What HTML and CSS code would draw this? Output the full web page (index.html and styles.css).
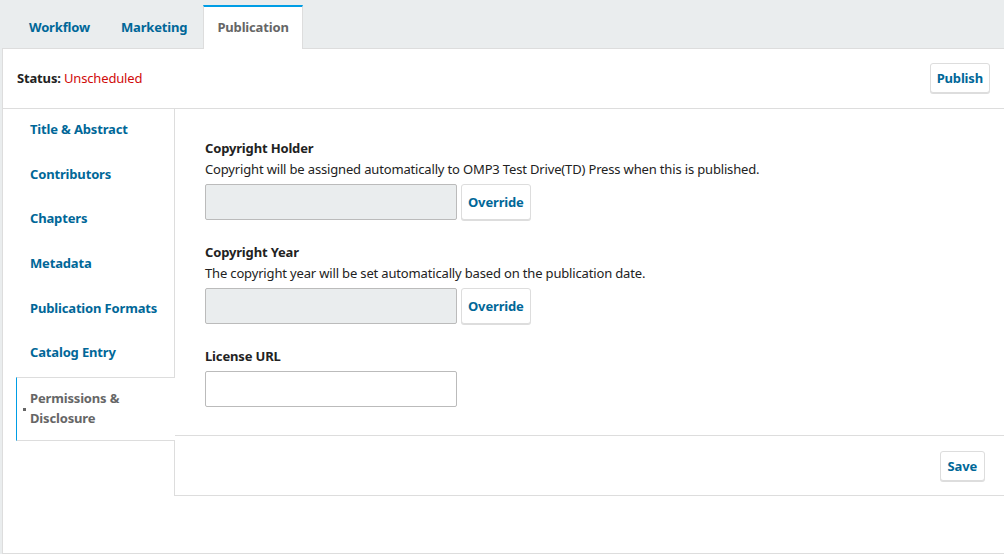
FILE: index.html
```html
<!DOCTYPE html>
<html lang="en">
<head>
<meta charset="utf-8">
<title>Publication</title>
<link rel="stylesheet" href="styles.css">
</head>
<body>
<div class="page">
  <nav class="tabs">
    <a class="tab">Workflow</a>
    <a class="tab">Marketing</a>
    <a class="tab tab--active">Publication</a>
  </nav>
  <div class="panel">
    <div class="status-bar">
      <div class="status"><strong>Status:</strong> <span class="status__value">Unscheduled</span></div>
      <button class="btn btn--publish">Publish</button>
    </div>
    <div class="layout">
      <ul class="side-nav">
        <li class="side-nav__item">Title &amp; Abstract</li>
        <li class="side-nav__item">Contributors</li>
        <li class="side-nav__item">Chapters</li>
        <li class="side-nav__item">Metadata</li>
        <li class="side-nav__item">Publication Formats</li>
        <li class="side-nav__item">Catalog Entry</li>
        <li class="side-nav__item side-nav__item--active">Permissions &amp;<br>Disclosure</li>
      </ul>
      <div class="content">
        <form class="form">
          <div class="field">
            <div class="field__label">Copyright Holder</div>
            <div class="field__desc">Copyright will be assigned automatically to OMP3 Test Drive(TD) Press when this is published.</div>
            <div class="field__row">
              <input class="input input--disabled" type="text" disabled>
              <button class="btn btn--tall" type="button">Override</button>
            </div>
          </div>
          <div class="field">
            <div class="field__label">Copyright Year</div>
            <div class="field__desc">The copyright year will be set automatically based on the publication date.</div>
            <div class="field__row">
              <input class="input input--disabled" type="text" disabled>
              <button class="btn btn--tall" type="button">Override</button>
            </div>
          </div>
          <div class="field field--last">
            <div class="field__label">License URL</div>
            <div class="field__row">
              <input class="input" type="text">
            </div>
          </div>
        </form>
        <div class="form-footer">
          <button class="btn" type="button">Save</button>
        </div>
      </div>
    </div>
  </div>
</div>
</body>
</html>
```

FILE: styles.css
```css
* { box-sizing: border-box; }

html, body {
  margin: 0;
  padding: 0;
}

body {
  background: #eaedee;
  font-family: "Noto Sans", "Open Sans", sans-serif;
  font-size: 13px;
  line-height: 20px;
  letter-spacing: -0.16px;
  color: #222;
  overflow: hidden;
}

.page {
  width: 1004px;
  height: 554px;
}

.tabs {
  display: flex;
  align-items: flex-end;
  height: 48px;
  padding-left: 15px;
  gap: 3px;
}

.tab {
  display: flex;
  align-items: center;
  height: 43px;
  padding: 0 13px 1px;
  font-weight: 700;
  color: #006798;
  border-top: 2px solid transparent;
  border-left: 1px solid transparent;
  border-right: 1px solid transparent;
}

.tab--active {
  background: #fff;
  color: #666;
  border-top-color: #009de5;
  border-left-color: #ddd;
  border-right-color: #ddd;
  position: relative;
  margin-left: -1px;
  margin-bottom: -1px;
  height: 44px;
  padding-bottom: 2px;
  z-index: 1;
}

.panel {
  margin-left: 2px;
  background: #fff;
  border: 1px solid #ddd;
  border-right: none;
  height: 506px;
}

.status-bar {
  display: flex;
  align-items: center;
  justify-content: space-between;
  height: 60px;
  padding: 0 14px 1px 14px;
  border-bottom: 1px solid #ddd;
}

.status__value {
  color: #d00a0a;
}

.btn {
  font-family: inherit;
  font-size: 13px;
  font-weight: 700;
  letter-spacing: -0.16px;
  color: #006798;
  background: #fff;
  border: 1px solid #ddd;
  border-radius: 3px;
  box-shadow: 0 1px 0 #ddd;
  height: 30px;
  padding: 0 7px;
  line-height: 20px;
}

.btn--publish {
  padding: 0 6px;
}

.btn--tall {
  height: 36px;
  margin-left: 4px;
  padding: 0 6px 1px;
}

.layout {
  display: flex;
  align-items: stretch;
}

.side-nav {
  list-style: none;
  margin: 0;
  padding: 0 0 0 13px;
  width: 172px;
  flex: none;
  border-right: 1px solid #ddd;
}

.side-nav__item {
  position: relative;
  padding: 9px 13px 13.67px;
  border: 1px solid transparent;
  border-right: none;
  font-weight: 700;
  color: #006798;
}

.side-nav__item--active {
  color: #666;
  background: #fff;
  border-top-color: #ddd;
  border-bottom-color: #ddd;
  border-left-color: #009de5;
  margin-right: -1px;
  padding-top: 10px;
  padding-bottom: 12px;
}

.side-nav__item--active::before {
  content: "";
  position: absolute;
  left: 6px;
  top: 30px;
  width: 3px;
  height: 3px;
  background: #666;
}

.content {
  flex: 1;
  display: flex;
  flex-direction: column;
}

.form {
  padding: 29px 30px 28px;
}

.field {
  margin-bottom: 22px;
}

.field--last {
  margin-bottom: 0;
}

.field__label {
  font-weight: 700;
}

.field__desc {
  margin-top: 1px;
}

.field__row {
  display: flex;
  align-items: center;
  margin-top: 5px;
}

.input {
  width: 252px;
  height: 36px;
  border: 1px solid #bbb;
  border-radius: 2px;
  background: #fff;
  font-family: inherit;
  font-size: 13px;
  margin: 0;
}

.input--disabled {
  background: #eaedee;
}

.form-footer {
  display: flex;
  justify-content: flex-end;
  align-items: center;
  height: 61px;
  padding: 0 19px;
  border-top: 1px solid #ddd;
  border-bottom: 1px solid #ddd;
}
```
